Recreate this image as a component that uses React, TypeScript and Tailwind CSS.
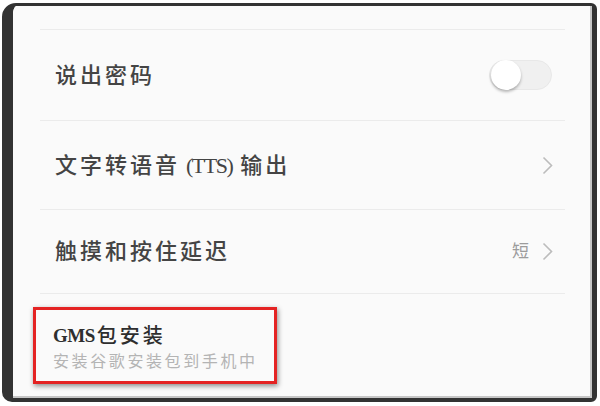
const FONT = { fontFamily: '"Liberation Serif", "Noto Sans CJK SC", serif' };

function Chevron() {
  return (
    <svg width="11" height="19" viewBox="0 0 11 19" className="shrink-0">
      <path d="M1.5 1.5 L9.5 9.5 L1.5 17.5" fill="none" stroke="#bcbcbc" strokeWidth="1.6" />
    </svg>
  );
}

function Toggle() {
  return (
    <div className="relative h-[30px] w-[63px] rounded-full border border-[#e8e8e8] bg-[#f0f0f0]">
      <div className="absolute left-[1px] top-[-1px] h-[30px] w-[30px] rounded-full bg-white shadow-[0_2px_3px_rgba(0,0,0,0.28)]" />
    </div>
  );
}

function Divider() {
  return <div className="ml-[27px] mr-[25px] h-px bg-[#ebebeb]" />;
}

export default function App() {
  return (
    <div className="h-[406px] w-[600px] bg-white pl-[2px] pt-[3px]" style={FONT}>
      <div className="h-[399px] w-[595px] rounded-tl-[14px] rounded-bl-[10px] rounded-r-[6px] border-t-[3px] border-l-[11px] border-r-[5px] border-b-[4px] border-[#333333]">
        <div className="flex h-full flex-col rounded-tl-[6px] border-r-[2px] border-b-[2px] border-[#c6c6c6] bg-[#fafafa]">
          <div className="h-[23px]" />
          <Divider />
          <div className="ml-[27px] mr-[25px] flex h-[90px] items-center justify-between pl-[15px] pr-[13px]">
            <span className="text-[22px] font-medium tracking-[3px] text-[#444444]">说出密码</span>
            <Toggle />
          </div>
          <Divider />
          <div className="ml-[27px] mr-[25px] flex h-[88px] items-center justify-between pl-[15px] pr-[12px]">
            <span className="flex items-center font-medium text-[#444444]">
              <span className="text-[22px] tracking-[3px]">文字转语音</span>
              <span className="ml-[6px] mr-[8px] text-[22px] tracking-[-1.5px]">(TTS)</span>
              <span className="text-[22px] tracking-[3px]">输出</span>
            </span>
            <Chevron />
          </div>
          <Divider />
          <div className="ml-[27px] mr-[25px] flex h-[83px] items-center justify-between pl-[15px] pr-[12px]">
            <span className="text-[22px] font-medium tracking-[3px] text-[#444444]">触摸和按住延迟</span>
            <span className="flex items-center gap-[13px]">
              <span className="text-[17px] text-[#9c9c9c]">短</span>
              <Chevron />
            </span>
          </div>
          <Divider />
          <div className="ml-[20px] mt-[13px] h-[77px] w-[244px] border-[3px] border-[#e42323] pl-[17px] pt-[14px] shadow-[1px_2px_5px_rgba(0,0,0,0.45)]">
            <div className="flex h-[24px] items-center text-[#2e2e2e]">
              <span className="text-[19px] font-bold tracking-[-0.5px]">GMS</span>
              <span className="ml-[2px] text-[20px] font-medium tracking-[3px]">包安装</span>
            </div>
            <div className="mt-[4px] text-[16px] leading-[20px] tracking-[2.6px] text-[#b4b4b4]">
              安装谷歌安装包到手机中
            </div>
          </div>
        </div>
      </div>
    </div>
  );
}
